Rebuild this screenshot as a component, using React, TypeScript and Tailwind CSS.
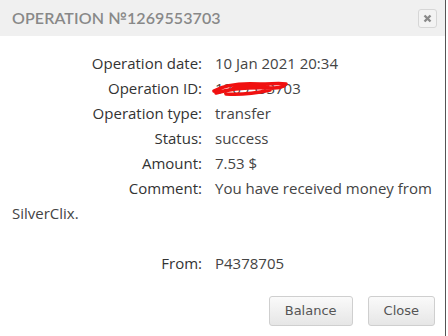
import React from "react";

const rows: { label: string; value: React.ReactNode }[] = [
  { label: "Operation date:", value: "10 Jan 2021 20:34" },
  {
    label: "Operation ID:",
    value: (
      <span className="relative inline-block">
        1269553703
        <svg
          className="absolute left-[-3px] top-[3px]"
          width="80"
          height="20"
          viewBox="0 0 80 20"
          fill="none"
        >
          <path
            d="M2 12 C 12 6, 30 4, 48 5 C 60 5, 68 4, 74 5 M4 14 C 20 9, 40 8, 62 9 C 66 9, 70 8, 72 7 M14 15 C 26 16, 40 15, 58 11 M20 10 C 30 7, 44 6, 56 8"
            stroke="#f01010"
            strokeWidth="3.5"
            strokeLinecap="round"
          />
        </svg>
      </span>
    ),
  },
  { label: "Operation type:", value: "transfer" },
  { label: "Status:", value: "success" },
  { label: "Amount:", value: "7.53 $" },
  { label: "Comment:", value: "You have received money from SilverClix." },
];

function Label({ children }: { children: React.ReactNode }) {
  return (
    <span className="inline-block w-[190px] mr-[13px] text-right text-[#333]">{children}</span>
  );
}

export default function App() {
  return (
    <div className="w-[448px] h-[336px] bg-white flex">
      <div className="w-[446px] h-full flex flex-col border-r border-[#555]">
        <div className="h-[36px] bg-[#f0f0f0] flex items-center justify-between pl-[12px] pr-[8px]">
          <span
            className="text-[16px] tracking-[0.1px] text-[#888] font-semibold uppercase"
            style={{ fontFamily: "Lato, 'DejaVu Sans', sans-serif" }}
          >
            Operation №1269553703
          </span>
          <button className="w-[19px] h-[19px] rounded-[3px] border border-[#d6d6d6] bg-[#f3f3f3] flex items-center justify-center">
            <svg width="9" height="9" viewBox="0 0 9 9">
              <path d="M1.5 1.5 L7.5 7.5 M7.5 1.5 L1.5 7.5" stroke="#8a8a8a" strokeWidth="2.4" />
            </svg>
          </button>
        </div>

        <div
          className="pt-[15px] pl-[12px] pr-[12px] text-[15px] leading-[25px] text-[#444]"
          style={{ fontFamily: "'Open Sans', Lato, sans-serif" }}
        >
          {rows.map((r) => (
            <div key={r.label}>
              <Label>{r.label}</Label>
              {r.value}
            </div>
          ))}
          <div className="h-[25px]" />
          <div>
            <Label>From:</Label>
            P4378705
          </div>
        </div>

        <div className="flex justify-end gap-[15px] pr-[10px] pt-[20px]">
          {["Balance", "Close"].map((b) => (
            <button
              key={b}
              className="h-[30px] px-[15px] rounded-[3px] border border-[#cfcfcf] bg-gradient-to-b from-[#fafafa] to-[#e6e6e6] text-[13px] text-[#555]"
              style={{ fontFamily: "'DejaVu Sans', Verdana, sans-serif" }}
            >
              {b}
            </button>
          ))}
        </div>
      </div>
    </div>
  );
}
